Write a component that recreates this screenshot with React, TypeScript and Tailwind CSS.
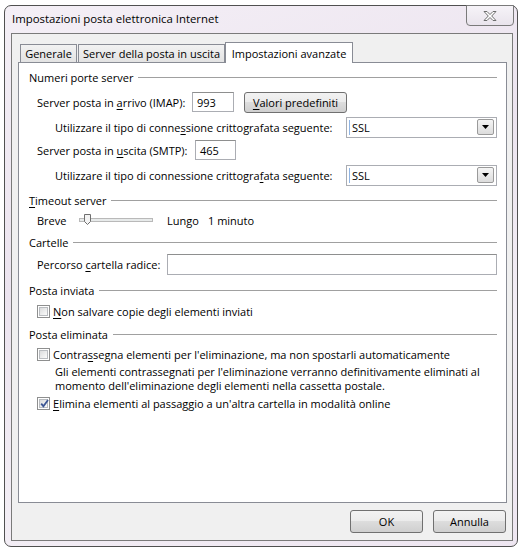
import type { ReactNode } from 'react';

const U = ({ children }: { children: ReactNode }) => (
  <span className="underline decoration-1 underline-offset-[2px]">{children}</span>
);

function Header({ children, className = '' }: { children: ReactNode; className?: string }) {
  return (
    <div className={`flex h-[20px] items-center ${className}`}>
      <span className="whitespace-nowrap">{children}</span>
      <span className="ml-[5px] h-px flex-1 bg-[#a0a0a0]" />
    </div>
  );
}

function TextBox({ value = '', className = '' }: { value?: string; className?: string }) {
  return (
    <div
      className={`flex h-[20px] items-center border border-[#abadb3] border-t-[#8e8f8f] bg-white pl-[4px] ${className}`}
    >
      {value}
    </div>
  );
}

function Combo() {
  return (
    <div className="flex h-[21px] w-[151px] items-center border border-[#abadb3] bg-white pl-[2px] pr-[2px]">
      <span className="h-[15px] w-px bg-[#8fb4e3]" />
      <span className="ml-[2px] flex-1">SSL</span>
      <span className="flex h-[16px] w-[17px] items-center justify-center rounded-[2px] border border-[#9a9a9a] bg-gradient-to-b from-[#f5f5f5] to-[#dcdcdc]">
        <svg width="7" height="4" viewBox="0 0 7 4">
          <path d="M0 0h7L3.5 4z" fill="#000" />
        </svg>
      </span>
    </div>
  );
}

function Check({ checked = false }: { checked?: boolean }) {
  return (
    <span className="relative flex h-[13px] w-[13px] shrink-0 items-center justify-center border border-[#8e8f8f] bg-white">
      <span className="h-[9px] w-[9px] border border-[#b9bcc0] bg-gradient-to-br from-[#dbdcdd] to-[#fbfbfb]" />
      {checked && (
        <svg className="absolute left-[1px] top-[0px]" width="11" height="11" viewBox="0 0 11 11">
          <path d="M2.2 5.6 L4.4 8.2 L9 2" fill="none" stroke="#3c5694" strokeWidth="1.8" />
        </svg>
      )}
    </span>
  );
}

function WinButton({ children, className = '' }: { children: ReactNode; className?: string }) {
  return (
    <div
      className={`flex items-center justify-center rounded-[3px] border border-[#707070] bg-[linear-gradient(#f2f2f2_0%,#ebebeb_49%,#dddddd_50%,#cfcfcf_100%)] ${className}`}
    >
      {children}
    </div>
  );
}

export default function App() {
  return (
    <div className="h-[552px] w-[525px] bg-white pl-[4px] pt-[5px] font-['Segoe_UI','Open_Sans',sans-serif] text-[11px] leading-none whitespace-nowrap text-black">
      <div className="flex h-[542px] w-[514px] flex-col rounded-[7px] border border-[#505050] bg-[linear-gradient(160deg,#f4eff6_0%,#ece4ef_40%,#f3eef5_70%,#eee6f1_100%)] pb-[5px] pl-[6px] pr-[4px]">
        {/* Title bar */}
        <div className="flex h-[27px] items-start justify-between">
          <span className="ml-[1px] mt-[7px] text-[11.4px]">Impostazioni posta elettronica Internet</span>
          <div className="-mr-[1px] -mt-px flex h-[21px] w-[48px] items-center justify-center rounded-b-[4px] border border-[#7a7a7a] bg-gradient-to-b from-[#f6f3f8] to-[#e9e4ec]">
            <svg width="14" height="10" viewBox="0 0 14 10">
              <path
                d="M1 0.5h3l3 3 3-3h3l-4.3 4.5 4.3 4.5h-3l-3-3-3 3h-3l4.3-4.5z"
                fill="#fff"
                stroke="#6d6d6d"
                strokeWidth="1"
                strokeLinejoin="round"
              />
            </svg>
          </div>
        </div>

        {/* Client area */}
        <div className="flex flex-1 flex-col border border-[#7a7a7a] bg-[#f0f0f0] pl-[6px] pr-[5px] pt-[8px]">
          {/* Tabs */}
          <div className="flex h-[20px] items-end pl-[2px]">
            <div className="flex h-[18px] w-[57px] items-center justify-center border-x border-t border-[#898c95] bg-gradient-to-b from-[#f2f2f2] to-[#e3e3e3]">
              Generale
            </div>
            <div className="ml-px flex h-[18px] w-[147px] items-center justify-center border-x border-t border-[#898c95] bg-gradient-to-b from-[#f2f2f2] to-[#e3e3e3]">
              Server della posta in uscita
            </div>
            <div className="relative z-10 -mb-px flex h-[21px] w-[128px] items-start justify-center border-x border-t border-[#898c95] bg-white pt-[5px]">
              Impostazioni avanzate
            </div>
          </div>

          {/* Tab page */}
          <div className="flex h-[441px] flex-col border border-[#898c95] bg-white pl-[10px] pr-[9px]">
            <Header className="mt-[4px]">Numeri porte server</Header>

            <div className="mt-[5px] flex h-[20px] items-center pl-[8px]">
              <span className="w-[155px]">
                Server posta in <U>a</U>rrivo (IMAP):
              </span>
              <TextBox value="993" className="w-[42px]" />
              <WinButton className="ml-[10px] h-[21px] w-[103px]">
                <span>
                  <U>V</U>alori predefiniti
                </span>
              </WinButton>
            </div>

            <div className="mt-[5px] flex h-[20px] items-center pl-[26px]">
              <span className="w-[291px]">
                Utilizzare il tipo di conne<U>s</U>sione crittografata seguente:
              </span>
              <Combo />
            </div>

            <div className="mt-[3px] flex h-[20px] items-center pl-[8px]">
              <span className="w-[158px]">
                Server posta in <U>u</U>scita (SMTP):
              </span>
              <TextBox value="465" className="w-[41px]" />
            </div>

            <div className="mt-[5px] flex h-[20px] items-center pl-[26px]">
              <span className="w-[291px]">
                Utilizzare il tipo di connessione crittogra<U>f</U>ata seguente:
              </span>
              <Combo />
            </div>

            <Header className="mt-[5px]">
              <U>T</U>imeout server
            </Header>

            <div className="flex h-[20px] items-center pl-[8px]">
              <span className="w-[42px]">Breve</span>
              <svg width="74" height="14" viewBox="0 0 74 14">
                <rect x="0.5" y="5.5" width="73" height="3" fill="#e7eaea" stroke="#b9b9b9" />
                <path d="M5.5 1.5h6v7l-3 3-3-3z" fill="#f3f3f3" stroke="#6f6f6f" />
              </svg>
              <span className="ml-[14px] w-[41px]">Lungo</span>
              <span>1 minuto</span>
            </div>

            <Header className="mt-[2px]">Cartelle</Header>

            <div className="mt-[2px] flex h-[20px] items-center pl-[8px]">
              <span className="w-[130px]">
                Percorso <U>c</U>artella radice:
              </span>
              <TextBox className="h-[21px] flex-1" />
            </div>

            <Header className="mt-[6px]">Posta inviata</Header>

            <div className="mt-[1px] flex h-[20px] items-center gap-[3px] pl-[8px]">
              <Check />
              <span>
                <U>N</U>on salvare copie degli elementi inviati
              </span>
            </div>

            <Header className="mt-[3px]">Posta eliminata</Header>

            <div className="flex h-[20px] items-center gap-[3px] pl-[8px]">
              <Check />
              <span>
                Contra<U>s</U>segna elementi per l'eliminazione, ma non spostarli automaticamente
              </span>
            </div>

            <div className="mt-[1px] pl-[26px] leading-[14px]">
              Gli elementi contrassegnati per l'eliminazione verranno definitivamente eliminati al
              <br />
              momento dell'eliminazione degli elementi nella cassetta postale.
            </div>

            <div className="flex h-[20px] items-center gap-[3px] pl-[8px]">
              <Check checked />
              <span>
                <U>E</U>limina elementi al passaggio a un'altra cartella in modalità online
              </span>
            </div>
          </div>

          {/* Dialog buttons */}
          <div className="mr-[1px] mt-[7px] flex justify-end gap-[10px]">
            <WinButton className="h-[23px] w-[73px]">OK</WinButton>
            <WinButton className="h-[23px] w-[73px]">Annulla</WinButton>
          </div>
        </div>
      </div>
    </div>
  );
}
